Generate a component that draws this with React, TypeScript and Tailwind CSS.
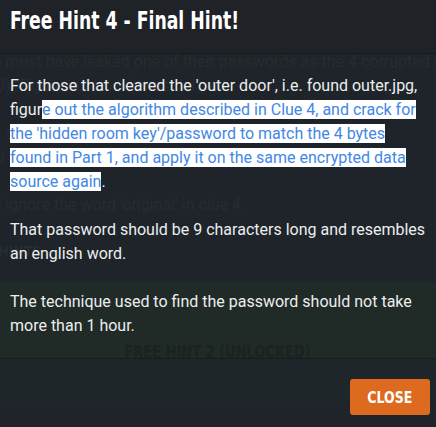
import React from 'react';

const faint = 'text-[#262c31]';
const cond = "[font-family:'DejaVu_Sans_Condensed',sans-serif]";

function BackgroundPage() {
  return (
    <div className="flex flex-col [font-family:Roboto,sans-serif] text-[16px] leading-6">
      <div className="h-[50px]" />
      <p className={`${faint} -ml-[7px] whitespace-nowrap`}>
        e must have leaked one of their passwords as the 4 corrupted b
      </p>
      <p className={`${faint} -ml-[4px] whitespace-nowrap`}>0)! Figure out how it was derived</p>
      <div className="h-6" />
      <p className={`${faint} -ml-[4px] whitespace-nowrap`}>r the first half of the hint; it is used only</p>
      <p className={`${faint} -ml-[4px] whitespace-nowrap`}>d once the door is open.</p>
      <div className="h-[23px]" />
      <p className={`${faint} -ml-[7px] whitespace-nowrap`}>e ignore the word 'original' in clue 4.</p>
      <div className="h-[24px]" />
      <p className={`${faint} ${cond} -ml-[2px] text-[14px] font-bold leading-5`}>HINTS</p>
      <div className="h-[21px]" />
      <div className="flex h-[120px] flex-col items-center bg-[#202a26]">
        <div className="h-[60px]" />
        <p className={`${cond} origin-center scale-x-[0.85] text-[17px] font-bold leading-5 text-[#1b2322]`}>
          FREE HINT 2 (UNLOCKED)
        </p>
      </div>
      <div className="flex flex-col items-center pt-[16px]">
        <p className={`${cond} origin-center scale-x-[0.85] text-[17px] font-bold leading-5 text-[#1a2025]`}>
          FREE HINT 3 (UNLOCKED)
        </p>
      </div>
    </div>
  );
}

function Hl({ children }: { children: React.ReactNode }) {
  return <span className="bg-white text-[#4287e4]">{children}</span>;
}

export default function App() {
  return (
    <div className="relative h-[427px] w-[436px] overflow-hidden bg-[#1e2429]">
      <BackgroundPage />

      {/* modal */}
      <div className="absolute inset-0 flex flex-col">
        <div className="h-[54px] border-b border-[#171b1e] bg-[#1f2328] px-[10px] pt-[6px]">
          <h2
            className={`${cond} inline-block origin-left scale-x-[0.8] text-[24px] font-bold leading-[30px] text-white`}
          >
            Free Hint 4 - Final Hint!
          </h2>
        </div>

        <div className="flex flex-col gap-6 px-[10px] pt-[20px] pb-[20px] [font-family:Roboto,sans-serif] text-[16px] leading-6 text-[#eceef0]">
          <p>
            For those that cleared the 'outer door', i.e. found outer.jpg, figur
            <Hl>
              e out the algorithm described in Clue 4, and crack for the 'hidden room key'/password
              to match the 4 bytes found in Part 1, and apply it on the same encrypted data source
              again
            </Hl>
            .
          </p>
          <p>That password should be 9 characters long and resembles an english word.</p>
          <p>The technique used to find the password should not take more than 1 hour.</p>
        </div>

        <div className="flex flex-1 justify-end border-t border-[#181c20] bg-[#1f252b]/70 pt-[20px] pr-[6px]">
          <button className="h-[36px] w-[80px] rounded-[3px] bg-[#dd6a1f] text-white">
            <span className={`${cond} inline-block scale-x-[0.87] text-[16px] font-bold`}>CLOSE</span>
          </button>
        </div>
      </div>
    </div>
  );
}
